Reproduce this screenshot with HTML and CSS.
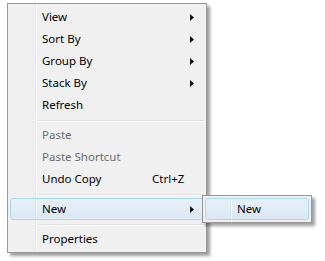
FILE: index.html
```html
<!DOCTYPE html>
<html>
<head>
<meta charset="utf-8">
<link rel="stylesheet" href="styles.css">
</head>
<body>
<div class="menu main">
  <div class="item"><span class="label">View</span><span class="key"></span><svg class="arrow" width="4" height="7" viewBox="0 0 4 7"><polygon points="0,0 4,3.5 0,7"/></svg></div>
  <div class="item"><span class="label">Sort By</span><span class="key"></span><svg class="arrow" width="4" height="7" viewBox="0 0 4 7"><polygon points="0,0 4,3.5 0,7"/></svg></div>
  <div class="item"><span class="label">Group By</span><span class="key"></span><svg class="arrow" width="4" height="7" viewBox="0 0 4 7"><polygon points="0,0 4,3.5 0,7"/></svg></div>
  <div class="item"><span class="label">Stack By</span><span class="key"></span><svg class="arrow" width="4" height="7" viewBox="0 0 4 7"><polygon points="0,0 4,3.5 0,7"/></svg></div>
  <div class="item"><span class="label">Refresh</span></div>
  <div class="sep"></div>
  <div class="item disabled"><span class="label">Paste</span></div>
  <div class="item disabled"><span class="label">Paste Shortcut</span></div>
  <div class="item"><span class="label">Undo Copy</span><span class="key">Ctrl+Z</span></div>
  <div class="sep"></div>
  <div class="item hover"><span class="label">New</span><span class="key"></span><svg class="arrow" width="4" height="7" viewBox="0 0 4 7"><polygon points="0,0 4,3.5 0,7"/></svg></div>
  <div class="sep"></div>
  <div class="item"><span class="label">Properties</span></div>
</div>
<div class="menu sub">
  <div class="item hover"><span class="label">New</span></div>
</div>
</body>
</html>
```
FILE: styles.css
```css
html, body {
  margin: 0;
  padding: 0;
  background: #ffffff;
}
body {
  width: 325px;
  height: 261px;
  overflow: hidden;
  font-family: "Noto Sans", "Open Sans", sans-serif;
  font-size: 11.5px;
  color: #000;
}
.menu {
  box-sizing: border-box;
  border: 1px solid #979797;
  background-color: #f0f0f0;
  background-image: linear-gradient(to right, transparent 27px, #e2e3e3 27px, #e2e3e3 28px, #ffffff 28px, #ffffff 29px, transparent 29px);
  box-shadow: 3px 3px 3px rgba(0, 0, 0, 0.38);
  padding: 2px;
}
.main {
  width: 200px;
  margin: 3px 0 0 7px;
}
.sub {
  position: absolute;
  left: 202px;
  top: 195px;
  width: 110px;
  padding: 2px;
}
.item {
  box-sizing: border-box;
  height: 22px;
  line-height: 20px;
  display: grid;
  grid-template-columns: 1fr 38px 4px;
  align-items: center;
  padding: 0 9px 0 31px;
  border: 1px solid transparent;
  border-radius: 3px;
  white-space: nowrap;
}
.disabled {
  color: #6d6d6d;
}
.arrow {
  display: block;
  fill: #111;
}
.hover {
  border-color: #a9d9f2;
  background: linear-gradient(to bottom, rgba(225, 240, 252, 0.55), rgba(196, 226, 250, 0.5));
}
.sep {
  height: 0;
  margin: 4px 0 2px 27px;
  border-top: 1px solid #e0e0e0;
  border-bottom: 1px solid #ffffff;
}
```
